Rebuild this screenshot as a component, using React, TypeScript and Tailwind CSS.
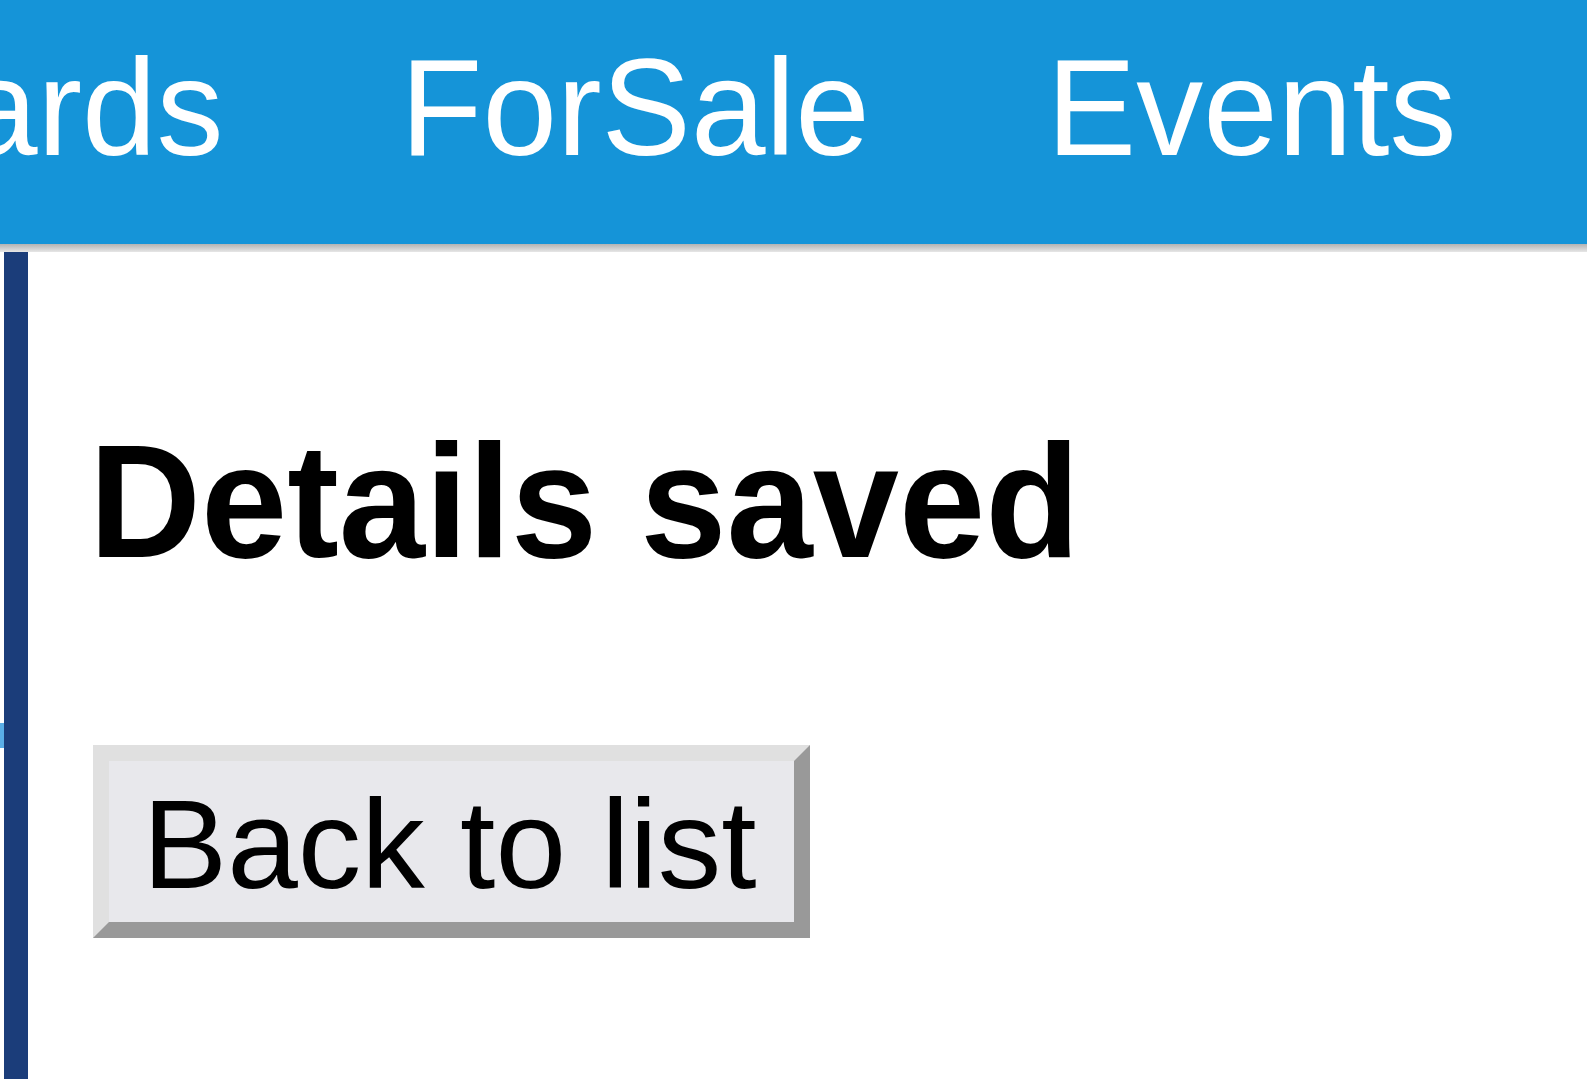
import React from "react";

export default function App() {
  return (
    <div className="w-[1587px] h-[1079px] overflow-hidden bg-white font-['Liberation_Sans',Arial,sans-serif]">
      <header className="h-[244px] bg-[#1594d8] flex items-start overflow-hidden">
        <nav className="flex pt-[41px] text-white text-[134px] leading-none whitespace-nowrap">
          <span className="-ml-[201px] scale-y-[1.03]">Boards</span>
          <span className="ml-[177px] scale-y-[1.03]">ForSale</span>
          <span className="ml-[177px] scale-y-[1.03]">Events</span>
        </nav>
      </header>
      <div className="h-[8px] bg-gradient-to-b from-[#b3b3b3] to-[#e6e6e6]" />
      <div className="flex h-[827px]">
        <div className="w-[4px] flex flex-col">
          <div className="mt-[471px] h-[25px] bg-[#5aaee6]" />
        </div>
        <div className="w-[24px] bg-[#1b3d7a]" />
        <main className="flex flex-col items-start pl-[59px]">
          <h1 className="mt-[172px] ml-[2px] text-[155px] leading-none font-bold text-black whitespace-nowrap scale-y-[1.04]">
            Details saved
          </h1>
          <button className="mt-[166px] ml-[6px] w-[717px] h-[193px] border-[16px] border-t-[#e0e0e0] border-l-[#e0e0e0] border-b-[#999999] border-r-[#999999] bg-[#e8e8ec] flex items-center justify-center pr-[4px] pt-[6px] text-[127px] leading-none text-black whitespace-nowrap">
            Back to list
          </button>
        </main>
      </div>
    </div>
  );
}
